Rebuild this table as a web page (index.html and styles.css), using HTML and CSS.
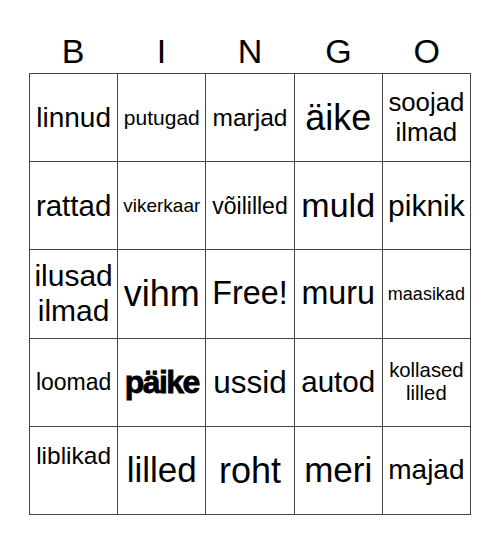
FILE: index.html
```html
<!DOCTYPE html>
<html>
<head>
<meta charset="utf-8">
<link rel="stylesheet" href="styles.css">
</head>
<body>
<div class="card">
  <div class="head">
    <span>B</span><span>I</span><span>N</span><span>G</span><span>O</span>
  </div>
  <div class="grid">
    <div class="cell f28">linnud</div>
    <div class="cell f21">putugad</div>
    <div class="cell f24">marjad</div>
    <div class="cell f36">äike</div>
    <div class="cell f26">soojad<br>ilmad</div>

    <div class="cell f29">rattad</div>
    <div class="cell f19">vikerkaar</div>
    <div class="cell f23">võililled</div>
    <div class="cell f34">muld</div>
    <div class="cell f30">piknik</div>

    <div class="cell f30">ilusad<br>ilmad</div>
    <div class="cell f36">vihm</div>
    <div class="cell f32">Free!</div>
    <div class="cell f32">muru</div>
    <div class="cell f18">maasikad</div>

    <div class="cell f23">loomad</div>
    <div class="cell heavy">päike</div>
    <div class="cell f31">ussid</div>
    <div class="cell f29">autod</div>
    <div class="cell f20">kollased<br>lilled</div>

    <div class="cell f24 raised">liblikad</div>
    <div class="cell f35">lilled</div>
    <div class="cell f36">roht</div>
    <div class="cell f35">meri</div>
    <div class="cell f28">majad</div>
  </div>
</div>
</body>
</html>
```
FILE: styles.css
```css
html, body {
  margin: 0;
  padding: 0;
  background: #fff;
}
body {
  font-family: "Liberation Sans", Arial, sans-serif;
  color: #000;
}
.card {
  width: 442px;
  margin-left: 29px;
  padding-top: 32px;
}
.head {
  display: grid;
  grid-template-columns: repeat(5, 1fr);
  height: 41px;
  font-size: 34px;
  line-height: 39px;
  text-align: center;
}
.grid {
  display: grid;
  grid-template-columns: repeat(5, 1fr);
  grid-auto-rows: 88.2px;
  border-top: 1px solid #444;
  border-left: 1px solid #444;
  box-sizing: border-box;
}
.cell {
  border-right: 1px solid #444;
  border-bottom: 1px solid #444;
  display: flex;
  align-items: center;
  justify-content: center;
  text-align: center;
  line-height: 1.15;
  overflow: hidden;
}
.raised { padding-bottom: 28px; box-sizing: border-box; }
.f18 { font-size: 18px; }
.f19 { font-size: 19px; }
.f20 { font-size: 20.3px; }
.f21 { font-size: 21px; }
.f23 { font-size: 23px; }
.f24 { font-size: 24.5px; }
.f26 { font-size: 25.8px; }
.f28 { font-size: 28px; }
.f29 { font-size: 29.5px; }
.f30 { font-size: 30px; }
.f31 { font-size: 31.5px; }
.f32 { font-size: 32.3px; }
.f34 { font-size: 34px; }
.f35 { font-size: 35px; }
.f36 { font-size: 36px; }
.heavy {
  font-size: 32px;
  font-weight: bold;
  letter-spacing: -1.6px;
  -webkit-text-stroke: 0.8px #000;
}
```
